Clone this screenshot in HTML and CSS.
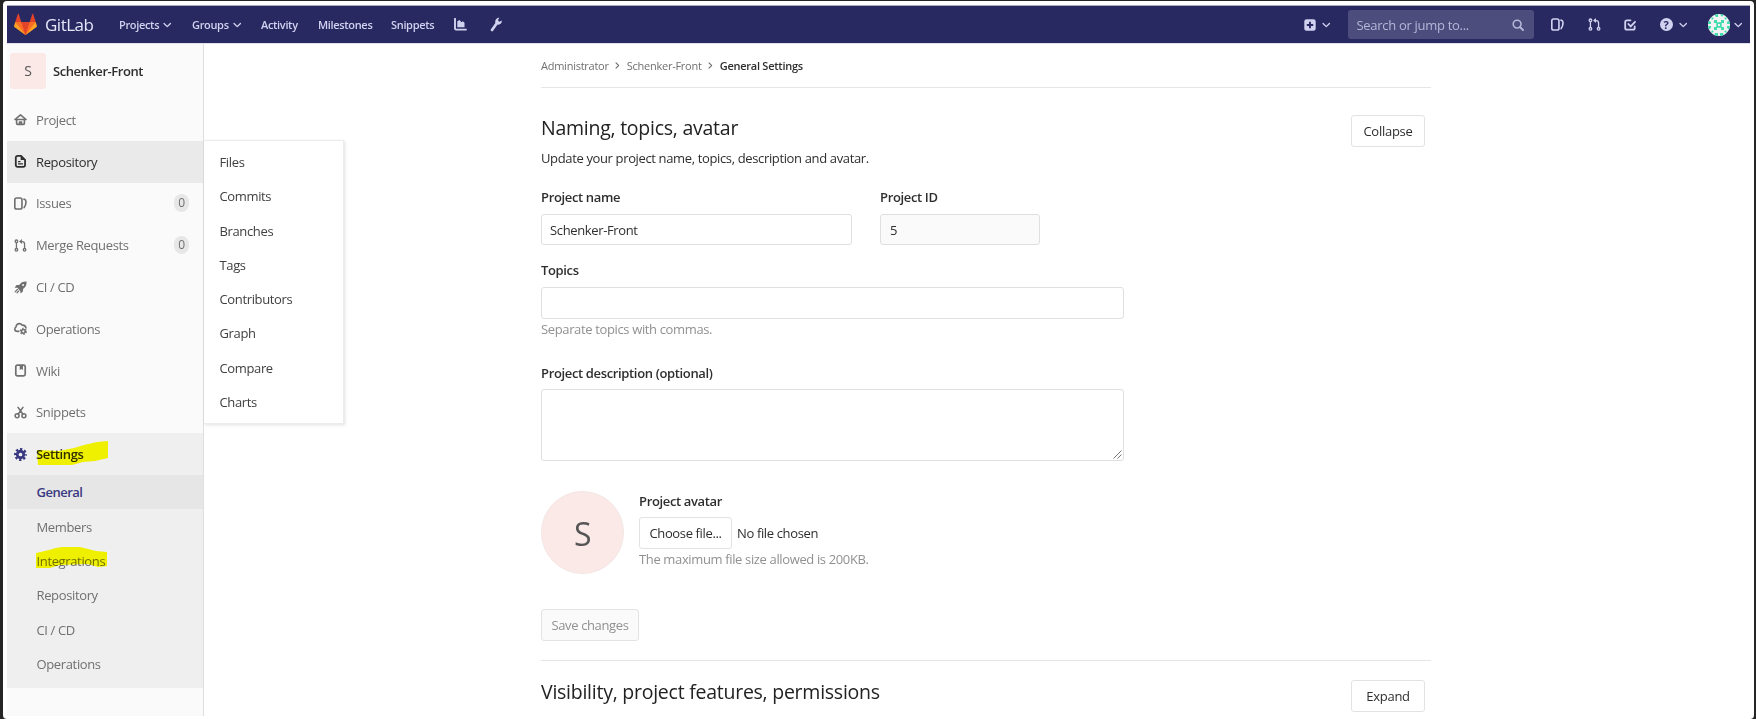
FILE: index.html
```html
<!DOCTYPE html>
<html lang="en">
<head>
<meta charset="utf-8">
<title>General Settings · Schenker-Front · GitLab</title>
<link rel="stylesheet" href="styles.css">
</head>
<body>
<svg class="defs" aria-hidden="true">
  <symbol id="chev" viewBox="0 0 8 8"><path d="M1 2.300l3 3 3-3" fill="none" stroke="currentColor" stroke-width="1.250" stroke-linecap="round" stroke-linejoin="round"/></symbol>
  <symbol id="issues" viewBox="0 0 16 16"><rect x="1" y="1.300" width="8.800" height="13.400" rx="2.200" fill="none" stroke="currentColor" stroke-width="2"/><path d="M12.300 2.600c1.900.5 2.500 1.500 2.500 2.900 0 2.800-.5 5.200-2.300 7.500" fill="none" stroke="currentColor" stroke-width="2" stroke-linecap="round"/></symbol>
  <symbol id="merge" viewBox="0 0 16 16"><g fill="none" stroke="currentColor" stroke-width="1.600"><circle cx="3" cy="2.800" r="1.600"/><circle cx="3" cy="13.300" r="1.600"/><circle cx="13" cy="13.300" r="1.600"/><path d="M3 4.300v7.500M13 11.800V6c0-1.800-1-2.800-2.800-2.800H8.500"/></g><path d="M9.800 0v6.300L6.200 3.200z" fill="currentColor"/></symbol>
  <symbol id="home" viewBox="0 0 16 16"><g fill="none" stroke="currentColor" stroke-width="2" stroke-linejoin="round" stroke-linecap="round"><path d="M1.200 8L8 2.200 14.800 8zM3.200 8.500v4.300c0 .7.500 1.200 1.200 1.200h7.200c.7 0 1.200-.5 1.200-1.200V8.500"/><path d="M6.800 13.500v-2.300h2.400v2.300"/></g></symbol>
  <symbol id="doc" viewBox="0 0 16 16"><path d="M4.500 1.200h4.200L13.600 6v6.300c0 1.400-.9 2.300-2.300 2.300H4.500c-1.400 0-2.300-.9-2.300-2.300V3.500c0-1.400.9-2.300 2.300-2.300z" fill="none" stroke="currentColor" stroke-width="2.200"/><path d="M8.200 1v5.300h5.300zM5 7.500h3v1.500H5zM5 10.300h6v1.500H5z" fill="currentColor"/></symbol>
  <symbol id="rocket" viewBox="0 0 16 16"><path d="M15.500.5c-4.500-.1-7 1.300-9.100 4.300L3.100 5 .8 8.200l3.100.1 3.900 3.900.1 3.100 3.100-2.300.2-3.300C14.200 7.600 15.600 5 15.500.5z" fill="currentColor"/><circle cx="11.200" cy="4.800" r="1.200" fill="#fafafa"/><path d="M4.200 10.500l-2.800 2.800M6 12.200l-2.200 2.300" stroke="currentColor" stroke-width="1.500" stroke-linecap="round"/></symbol>
  <symbol id="ops" viewBox="0 0 16 16"><path d="M6 11.500H4.400C2.400 11.500 1 10.100 1 8.500c0-1.100.6-2 1.500-2.500C2.500 3.700 4.300 2 6.500 2c1.500 0 2.800.7 3.500 1.900 2.500-.1 4.300 1.200 4.700 3.300" fill="none" stroke="currentColor" stroke-width="2" stroke-linecap="round"/><circle cx="11.500" cy="11.500" r="2.300" fill="none" stroke="currentColor" stroke-width="2"/><circle cx="11.500" cy="11.500" r="3.800" fill="none" stroke="currentColor" stroke-width="1.400" stroke-dasharray="1.900 2.079"/></symbol>
  <symbol id="wiki" viewBox="0 0 16 16"><rect x="2.200" y="1.500" width="11.600" height="13" rx="2" fill="none" stroke="currentColor" stroke-width="2.100"/><path d="M7 2h4v5.300L9 6 7 7.300z" fill="currentColor"/></symbol>
  <symbol id="snip" viewBox="0 0 16 16"><g fill="none" stroke="currentColor" stroke-width="1.900" stroke-linecap="round"><circle cx="3.800" cy="12" r="2.400"/><circle cx="12.200" cy="12" r="2.400"/><path d="M5 10.200L11 1.700M11 10.200L5 1.700"/></g></symbol>
  <symbol id="gear" viewBox="0 0 16 16"><circle cx="8" cy="8" r="4" fill="none" stroke="currentColor" stroke-width="3.400"/><circle cx="8" cy="8" r="6.500" fill="none" stroke="currentColor" stroke-width="3" stroke-dasharray="2.800 2.305" stroke-dashoffset="1.400"/></symbol>
</svg>
<div class="window">
  <header class="topbar">
    <a class="brand">
      <svg class="logo" viewBox="0 0 36 36"><path fill="#e24329" d="M2 14l9.380 9v-9l-4-12.280c-.205-.632-1.176-.632-1.380 0zM34 14l-9.380 9v-9l4-12.280c.205-.632 1.176-.632 1.380 0zM18 34.380L3 14h30z"/><path fill="#fc6d26" d="M18 34.380L11.380 14H2l4 11zM18 34.380L24.620 14H34l-4 11z"/><path fill="#fca326" d="M2 14L.1 20.160c-.18.565 0 1.200.5 1.560l17.420 12.660zM34 14l1.900 6.160c.18.565 0 1.200-.5 1.560L18 34.380z"/></svg>
      <span class="wordmark">GitLab</span>
    </a>
    <nav class="nav">
      <a class="n-projects">Projects<svg class="chev"><use href="#chev"/></svg></a>
      <a class="n-groups">Groups<svg class="chev"><use href="#chev"/></svg></a>
      <a class="n-activity">Activity</a>
      <a class="n-milestones">Milestones</a>
      <a class="n-snippets">Snippets</a>
      <a class="n-chart"><svg width="13" height="13" viewBox="0 0 13 13"><path d="M1 .8v9.700c0 .7.400 1.100 1.100 1.100H12" fill="none" stroke="currentColor" stroke-width="1.900" stroke-linecap="round"/><path d="M3.300 9.300V3.200L5.500 2l2 2.300 1.300-1 1.700 1.500v4.500z" fill="currentColor"/></svg></a>
      <a><svg width="13" height="15" viewBox="0 0 13 15"><path d="M2 13L7 6" stroke="currentColor" stroke-width="2.700" stroke-linecap="round"/><path d="M9.300.700L7.900 3.200l1.500 1.500L11.800 3.500c.3 2.800-1.600 4.500-4.300 4.100L5.300 5.800C4.900 2.900 6.500.5 9.300.700z" fill="currentColor"/></svg></a>
    </nav>
    <div class="tools">
      <a class="t-new"><svg width="12" height="12" viewBox="0 0 12 12"><rect x=".3" y=".3" width="11.400" height="11.400" rx="2.300" fill="currentColor"/><path d="M6 2.800v6.400M2.800 6h6.400" stroke="#292961" stroke-width="1.900"/></svg><svg class="chev"><use href="#chev"/></svg></a>
      <div class="search"><span>Search or jump to...</span><svg width="12" height="12" viewBox="0 0 12 12"><circle cx="5.100" cy="5.100" r="3.900" fill="none" stroke="currentColor" stroke-width="1.600"/><path d="M8 8l3 3" stroke="currentColor" stroke-width="1.900" stroke-linecap="round"/></svg></div>
      <a class="t-issues"><svg class="ic"><use href="#issues"/></svg></a>
      <a class="t-merge"><svg class="ic"><use href="#merge"/></svg></a>
      <a class="t-todo"><svg width="12" height="12" viewBox="0 0 12 12"><path d="M6.500 1.300H3C1.800 1.300 1.200 2 1.200 3v6c0 1 .6 1.700 1.800 1.700h6c1.100 0 1.700-.7 1.700-1.700V7.500M4.400 5l2.300 2.400 4.300-4.600" fill="none" stroke="currentColor" stroke-width="1.800" stroke-linecap="round"/></svg></a>
      <a class="t-help"><span class="q">?</span><svg class="chev"><use href="#chev"/></svg></a>
      <a class="t-user"><svg width="22" height="22" viewBox="0 0 22 22"><defs><clipPath id="round"><circle cx="11" cy="11" r="11"/></clipPath></defs><g clip-path="url(#round)"><path fill="#f2f2f2" d="M0 0h22v22H0z"/><path fill="#3fdcae" d="M8.300 8.300h5.400v5.400H8.300zM6 6h3v3H6zM13 6h3v3h-3zM6 13h3v3H6zM13 13h3v3h-3zM6 0h4v3H8zM12 0h4l-2 3zM6 22h4v-3H7zM12 22h4l-1-3h-3zM0 6l3 2v2H0zM22 6l-3 2v2h3zM0 16l3-2v-2H0zM22 16l-3-2v-2h3zM3 3l3 1-2 2zM19 3l-3 1 2 2zM3 19l3-1-2-2zM19 19l-3-1 2-2z"/><path fill="#f2f2f2" d="M10 10h2v2h-2z"/></g></svg><svg class="chev"><use href="#chev"/></svg></a>
    </div>
  </header>
  <div class="layout">
    <aside class="sidebar">
      <div class="project"><span class="initial">S</span><strong>Schenker-Front</strong></div>
      <a class="row"><svg class="ic"><use href="#home"/></svg>Project</a>
      <div class="row-wrap">
        <a class="row hover"><svg class="ic"><use href="#doc"/></svg>Repository</a>
        <div class="flyout"><a>Files</a><a>Commits</a><a>Branches</a><a>Tags</a><a>Contributors</a><a>Graph</a><a>Compare</a><a>Charts</a></div>
      </div>
      <a class="row"><svg class="ic"><use href="#issues"/></svg>Issues<span class="count">0</span></a>
      <a class="row"><svg class="ic"><use href="#merge"/></svg>Merge Requests<span class="count">0</span></a>
      <a class="row"><svg class="ic"><use href="#rocket"/></svg>CI / CD</a>
      <a class="row"><svg class="ic"><use href="#ops"/></svg>Operations</a>
      <a class="row"><svg class="ic"><use href="#wiki"/></svg>Wiki</a>
      <a class="row"><svg class="ic"><use href="#snip"/></svg>Snippets</a>
      <div class="active-group">
        <a class="row active"><svg class="ic"><use href="#gear"/></svg>Settings
          <svg class="mark mark-settings" viewBox="0 0 72 26"><path d="M1 10l22 1 15-3 10-3 13-3 11-1v17l-13 3-12 1-11 3H2z" fill="#ff0"/></svg></a>
        <a class="sub current">General</a>
        <a class="sub">Members</a>
        <a class="sub">Integrations
          <svg class="mark mark-integrations" viewBox="0 0 72 22"><path d="M0 7l13-3 7-2 6-1h18l8 2 8 2 11 1v14l-9 1-10-3-28 1-10 3H0z" fill="#ff0"/></svg></a>
        <a class="sub">Repository</a>
        <a class="sub">CI / CD</a>
        <a class="sub">Operations</a>
      </div>
    </aside>
    <main class="content">
      <div class="crumbs"><a>Administrator</a><svg class="sep"><use href="#chev"/></svg><a>Schenker-Front</a><svg class="sep"><use href="#chev"/></svg><strong>General Settings</strong></div>
      <section class="naming">
        <div class="head"><h4>Naming, topics, avatar</h4><button class="btn toggle">Collapse</button></div>
        <p class="desc">Update your project name, topics, description and avatar.</p>
        <div class="fields">
          <div class="f-name"><label>Project name</label><div class="input">Schenker-Front</div></div>
          <div class="f-id"><label>Project ID</label><div class="input readonly">5</div></div>
        </div>
        <div class="topics"><label>Topics</label><div class="input"></div><span class="help">Separate topics with commas.</span></div>
        <div class="about"><label>Project description (optional)</label><div class="textarea"><svg width="9" height="9" viewBox="0 0 9 9"><path d="M.5 8.500l8-8M4.500 8.500l4-4" stroke="#777" stroke-width="1"/></svg></div></div>
        <div class="avatar-row">
          <div class="avatar">S</div>
          <div><label>Project avatar</label><div class="file"><button class="btn">Choose file...</button><span>No file chosen</span></div><span class="help">The maximum file size allowed is 200KB.</span></div>
        </div>
        <button class="btn save">Save changes</button>
      </section>
      <section class="visibility">
        <div class="head"><h4>Visibility, project features, permissions</h4><button class="btn toggle">Expand</button></div>
      </section>
    </main>
  </div>
</div>
</body>
</html>
```
FILE: styles.css
```css
* { box-sizing: border-box; }
body {
  margin: 0;
  height: 719px;
  padding: 1px 2px 0 3px;
  overflow: hidden;
  background: #252525;
  color: #2e2e2e;
  font: 13px/20px "Open Sans", "Noto Sans", sans-serif;
  letter-spacing: -0.36px;
}
svg { display: block; flex: none; }
.defs { position: absolute; width: 0; height: 0; }
.window {
  height: 718px;
  padding: 4px 4px 3px;
  background: #fff;
  border-radius: 4px;
}
.ic { width: 13px; height: 13px; }
.chev { width: 8.5px; height: 8.5px; }
h4, p { margin: 0; }

/* top bar */
.topbar {
  display: flex;
  align-items: center;
  justify-content: space-between;
  height: 38px;
  padding: 0 8px 0 7px;
  background: #292961;
  border-top: 1px solid #aaaab8;
  color: #d1d1f0;
  font-size: 11px;
  font-weight: 600;
  letter-spacing: -0.33px;
}
.brand { display: flex; align-items: center; width: 105px; }
.logo { width: 23px; height: 23px; margin-right: 8px; }
.wordmark { font-size: 17px; font-weight: 400; letter-spacing: -0.5px; color: #e6e6fa; }
.nav { display: flex; align-items: center; flex: 1; }
.nav a { display: flex; align-items: center; }
.nav .chev { margin: 1px 0 0 4px; }
.n-projects { width: 73px; }
.n-groups { width: 69px; }
.n-activity { width: 57px; }
.n-milestones { width: 73px; }
.n-snippets { width: 63px; }
.n-chart { width: 36px; }
.tools { display: flex; align-items: center; }
.tools a { display: flex; align-items: center; }
.tools .chev { margin: 1px 0 0 6px; }
.search {
  display: flex;
  align-items: center;
  justify-content: space-between;
  width: 186px;
  height: 29px;
  margin: 0 17px;
  padding: 0 10px 0 9px;
  border-radius: 3px;
  background: #4c4c7d;
  color: #b6b6d9;
  font-size: 13px;
  font-weight: 400;
  letter-spacing: -0.3px;
}
.t-issues { width: 37px; }
.t-merge { width: 36px; }
.t-todo { width: 36px; }
.t-help { width: 48px; }
.q {
  width: 13px;
  height: 13px;
  border-radius: 50%;
  background: #d1d1f0;
  color: #292961;
  font-size: 11px;
  font-weight: 700;
  line-height: 13px;
  text-align: center;
}
.t-user .chev { margin-left: 4px; }

.layout { display: flex; height: 673px; border-top: 1px solid #e2e2ee; }

/* sidebar */
.sidebar {
  width: 197px;
  background: #fafafa;
  border-right: 1px solid #dfdfdf;
  color: #707070;
}
.project { display: flex; align-items: center; height: 55px; padding: 0 0 1px 3px; color: #2e2e2e; }
.project strong { font-size: 13px; font-weight: 600; letter-spacing: -0.45px; }
.initial {
  width: 36px;
  height: 36px;
  margin-right: 7px;
  border-radius: 3px;
  background: #fbe9e7;
  color: #555;
  font-size: 14px;
  line-height: 36px;
  text-align: center;
}
.row { position: relative; display: flex; align-items: center; height: 41.8px; padding: 0 14px 0 7px; }
.row .ic { margin-right: 9px; }
.hover { background: #eaeaea; color: #2e2e2e; }
.count {
  width: 15px;
  height: 18px;
  margin-left: auto;
  border-radius: 8px;
  background: #e7e7e7;
  font-size: 12px;
  line-height: 18px;
  text-align: center;
}
.active-group { height: 255px; background: #efefef; }
.active { color: #2e2e2e; font-weight: 600; letter-spacing: -0.35px; }
.active .ic { color: #393982; }
.sub { position: relative; display: flex; align-items: center; height: 34.3px; padding-left: 29.5px; }
.current { background: #e6e6e6; color: #393982; font-weight: 600; letter-spacing: -0.5px; }
.mark { position: absolute; mix-blend-mode: multiply; }
.mark-settings { left: 29px; top: 7px; width: 72px; height: 26px; }
.mark-integrations { left: 29px; top: 2px; width: 72px; height: 22px; }
.row-wrap { position: relative; }
.flyout {
  position: absolute;
  left: 197px;
  top: -1px;
  width: 140px;
  height: 284px;
  padding: 4px 0;
  border: 1px solid #ececec;
  border-left: 0;
  background: #fff;
  box-shadow: 1px 1px 3px rgba(0, 0, 0, .12);
  color: #404040;
}
.flyout a { display: flex; align-items: center; height: 34.3px; padding-left: 15.5px; }

/* main column */
.content { width: 890px; margin-left: 337px; }
.crumbs {
  display: flex;
  align-items: center;
  height: 44px;
  border-bottom: 1px solid #e6e6e6;
  color: #707070;
  font-size: 11px;
  letter-spacing: -0.25px;
}
.crumbs strong { font-weight: 600; color: #2e2e2e; letter-spacing: -0.25px; }
.sep { width: 7px; height: 7px; margin: 0 5.5px; transform: rotate(-90deg); }
.head { display: flex; justify-content: space-between; height: 32px; padding-right: 6px; }
h4 { font-size: 19.5px; font-weight: 500; line-height: 24px; letter-spacing: -0.25px; color: #222; }
.naming { height: 573px; padding-top: 28px; border-bottom: 1px solid #e5e5e5; }
.visibility { padding-top: 19px; }
.btn {
  height: 32px;
  padding: 0 9px;
  border: 1px solid #e3e3e3;
  border-radius: 3px;
  background: #fff;
  color: #2e2e2e;
  font: inherit;
  letter-spacing: inherit;
  white-space: nowrap;
}
.toggle { width: 74px; padding: 0; flex: none; letter-spacing: -0.25px; }
.naming .toggle { margin-top: -1px; }
label { display: block; font-weight: 600; line-height: 20px; letter-spacing: -0.35px; }
.input {
  height: 32px;
  margin-top: 7px;
  padding: 0 8px;
  border: 1px solid #dfdfdf;
  border-radius: 3px;
  line-height: 31px;
}
.readonly { background: #fafafa; padding-left: 9px; }
.help { display: block; color: #919191; }
.fields { display: flex; gap: 28px; margin-top: 19px; }
.fields .input { height: 31px; }
.f-name { width: 311px; }
.f-id { width: 160px; }
.topics { width: 583px; margin-top: 15px; }
.about { width: 583px; margin-top: 24px; }
.textarea {
  display: flex;
  align-items: flex-end;
  justify-content: flex-end;
  height: 72px;
  margin-top: 6px;
  padding: 1px;
  border: 1px solid #dfdfdf;
  border-radius: 3px;
}
.avatar-row { display: flex; gap: 15px; height: 84px; margin-top: 30px; }
.avatar {
  width: 83px;
  height: 83px;
  border: 1px solid #f3e6e4;
  border-radius: 50%;
  background: #fbe9e7;
  color: #555;
  font-size: 32px;
  line-height: 84px;
  text-align: center;
}
.file { display: flex; align-items: center; gap: 5px; margin-top: 6px; }
.file .btn { width: 93px; }
.save { width: 98px; margin-top: 34px; background: #fafafa; color: #919191; }
```
